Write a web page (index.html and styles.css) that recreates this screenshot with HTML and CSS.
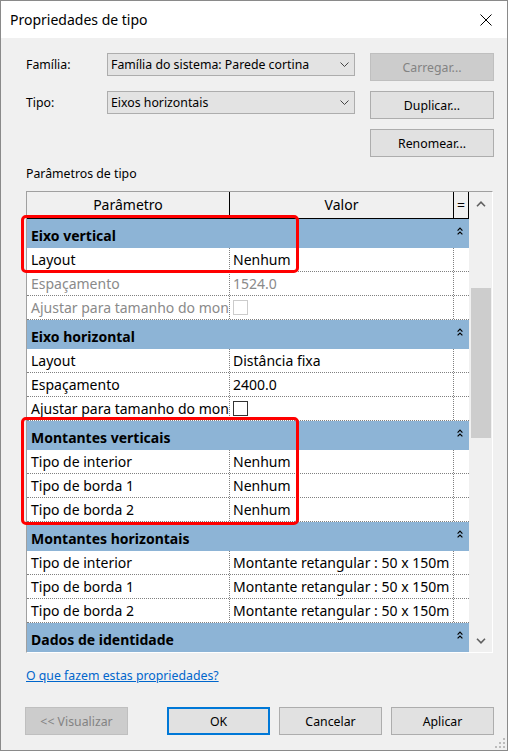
FILE: index.html
```html
<!DOCTYPE html>
<html lang="pt">
<head>
  <meta charset="UTF-8">
  <title>Propriedades de tipo</title>
  <link rel="stylesheet" href="styles.css">
</head>
<body>
  <div class="dialog">
    <!-- Barra de título -->
    <div class="titlebar">
      <span class="title">Propriedades de tipo</span>
      <svg class="close" width="12" height="12" viewBox="0 0 12 12">
        <path d="M0.5 0.5L11.5 11.5M11.5 0.5L0.5 11.5" stroke="#000" stroke-width="1"/>
      </svg>
    </div>

    <div class="content">
      <!-- Família e tipo -->
      <div class="type-form">
        <label>Família:</label>
        <div class="combo">
          <span>Família do sistema: Parede cortina</span>
          <svg width="9" height="5" viewBox="0 0 9 5"><path d="M0.5 0.5L4.5 4.5L8.5 0.5" fill="none" stroke="#444"/></svg>
        </div>
        <button class="btn" disabled>Carregar...</button>

        <label>Tipo:</label>
        <div class="combo">
          <span>Eixos horizontais</span>
          <svg width="9" height="5" viewBox="0 0 9 5"><path d="M0.5 0.5L4.5 4.5L8.5 0.5" fill="none" stroke="#444"/></svg>
        </div>
        <button class="btn">Duplicar...</button>

        <button class="btn btn-rename">Renomear...</button>
      </div>

      <div class="section-title">Parâmetros de tipo</div>

      <!-- Tabela de parâmetros -->
      <div class="grid-frame">
        <div class="grid">
          <div class="grid-header">
            <div>Parâmetro</div>
            <div>Valor</div>
            <div>=</div>
          </div>
          <div id="gridBody"></div>
        </div>
        <div class="scrollbar">
          <div class="scroll-arrow">
            <svg width="10" height="6" viewBox="0 0 10 6"><path d="M1 5.2L5 1.2L9 5.2" fill="none" stroke="#606060" stroke-width="1.6"/></svg>
          </div>
          <div class="scroll-track">
            <div class="scroll-thumb"></div>
          </div>
          <div class="scroll-arrow">
            <svg width="10" height="6" viewBox="0 0 10 6"><path d="M1 0.8L5 4.8L9 0.8" fill="none" stroke="#606060" stroke-width="1.6"/></svg>
          </div>
        </div>
      </div>

      <div class="help">
        <a href="#" class="help-link">O que fazem estas propriedades?</a>
      </div>

      <!-- Botões -->
      <div class="footer">
        <button class="btn btn-wide" disabled>&lt;&lt; Visualizar</button>
        <div class="footer-actions">
          <button class="btn btn-wide btn-default">OK</button>
          <button class="btn btn-wide">Cancelar</button>
          <button class="btn btn-wide">Aplicar</button>
        </div>
      </div>
    </div>

    <!-- Marcações -->
    <div class="mark mark-top"></div>
    <div class="mark mark-bottom"></div>

    <svg class="grip" width="10" height="10" viewBox="0 0 10 10" fill="#bcbcbc">
      <rect x="8" y="0" width="2" height="2"/>
      <rect x="4" y="4" width="2" height="2"/>
      <rect x="8" y="4" width="2" height="2"/>
      <rect x="0" y="8" width="2" height="2"/>
      <rect x="4" y="8" width="2" height="2"/>
      <rect x="8" y="8" width="2" height="2"/>
    </svg>
  </div>

  <script>
    // Grupos de parâmetros do tipo
    const groups = [
      {
        name: "Eixo vertical",
        rows: [
          { param: "Layout", value: "Nenhum" },
          { param: "Espaçamento", value: "1524.0", disabled: true },
          { param: "Ajustar para tamanho do montante", check: true, disabled: true }
        ]
      },
      {
        name: "Eixo horizontal",
        rows: [
          { param: "Layout", value: "Distância fixa" },
          { param: "Espaçamento", value: "2400.0" },
          { param: "Ajustar para tamanho do montante", check: true }
        ]
      },
      {
        name: "Montantes verticais",
        rows: [
          { param: "Tipo de interior", value: "Nenhum" },
          { param: "Tipo de borda 1", value: "Nenhum" },
          { param: "Tipo de borda 2", value: "Nenhum" }
        ]
      },
      {
        name: "Montantes horizontais",
        rows: [
          { param: "Tipo de interior", value: "Montante retangular : 50 x 150m" },
          { param: "Tipo de borda 1", value: "Montante retangular : 50 x 150m" },
          { param: "Tipo de borda 2", value: "Montante retangular : 50 x 150m" }
        ]
      },
      {
        name: "Dados de identidade",
        rows: []
      }
    ];

    const caretSvg = '<svg width="6" height="8" viewBox="0 0 6 8"><path d="M0.6 3.6L3 1.2L5.4 3.6M0.6 7.4L3 5L5.4 7.4" fill="none" stroke="#000" stroke-width="1.2"/></svg>';

    // Monta as linhas da tabela
    function renderGrid() {
      const gridBody = document.getElementById("gridBody");
      gridBody.innerHTML = '';

      groups.forEach(group => {
        const head = document.createElement("div");
        head.classList.add("group");

        const name = document.createElement("div");
        name.classList.add("group-name");
        name.textContent = group.name;

        const toggle = document.createElement("div");
        toggle.classList.add("group-toggle");
        toggle.innerHTML = caretSvg;

        head.appendChild(name);
        head.appendChild(toggle);
        gridBody.appendChild(head);

        group.rows.forEach(item => {
          const row = document.createElement("div");
          row.classList.add("row");
          if (item.disabled) row.classList.add("disabled");

          const param = document.createElement("div");
          param.classList.add("param");
          param.textContent = item.param;

          const value = document.createElement("div");
          value.classList.add("value");
          if (item.check) {
            const box = document.createElement("span");
            box.classList.add("check");
            value.appendChild(box);
          } else {
            value.textContent = item.value;
          }

          const eq = document.createElement("div");

          row.appendChild(param);
          row.appendChild(value);
          row.appendChild(eq);
          gridBody.appendChild(row);
        });
      });
    }

    renderGrid();
  </script>
</body>
</html>
```

FILE: styles.css
```css
/* Janela */
body {
  margin: 0;
  font-family: 'Noto Sans', sans-serif;
  font-size: 14px;
  color: #000;
}

.dialog {
  position: relative;
  width: 508px;
  height: 751px;
  box-sizing: border-box;
  border: 1px solid #8a8a8a;
  background-color: #f0f0f0;
  display: flex;
  flex-direction: column;
}

/* Barra de título */
.titlebar {
  height: 37px;
  flex-shrink: 0;
  background-color: white;
  display: flex;
  align-items: center;
  justify-content: space-between;
  padding: 0 15px 0 9px;
}

.content {
  padding: 15px 13px 0 25px;
  font-size: 12.3px;
}

/* Família / tipo */
.type-form {
  display: grid;
  grid-template-columns: 66px 248px 124px;
  grid-auto-rows: 28px;
  column-gap: 15px;
  row-gap: 10px;
}

.type-form label {
  line-height: 23px;
}

.combo {
  height: 23px;
  box-sizing: border-box;
  border: 1px solid #adadad;
  background-color: #e3e3e3;
  display: flex;
  align-items: center;
  justify-content: space-between;
  padding: 0 5px 0 3px;
}

.btn {
  height: 28px;
  box-sizing: border-box;
  padding: 0;
  font-family: inherit;
  font-size: 12.3px;
  color: #000;
  background-color: #e1e1e1;
  border: 1px solid #adadad;
}

.btn:disabled {
  background-color: #cccccc;
  border-color: #bfbfbf;
  color: #838383;
}

.btn-rename {
  grid-column: 3;
}

.btn-wide {
  width: 103px;
}

.btn-default {
  border: 2px solid #0078d7;
}

.section-title {
  margin: 7px 0;
  line-height: 20px;
}

/* Tabela de parâmetros */
.grid-frame {
  width: 467px;
  height: 462px;
  box-sizing: border-box;
  border-top: 1px solid #a0a0a0;
  border-left: 1px solid #a0a0a0;
  border-right: 1px solid #fff;
  border-bottom: 1px solid #fff;
  display: flex;
  overflow: hidden;
  font-size: 14px;
}

.grid {
  width: 442px;
  overflow: hidden;
  background-color: white;
}

.grid-header {
  display: grid;
  grid-template-columns: 203px 224px 15px;
  height: 27px;
  box-sizing: border-box;
  border-bottom: 1px solid #000;
  background-color: #f0f0f0;
}

.grid-header div {
  border-right: 1px solid #000;
  text-align: center;
  line-height: 26px;
}

.group {
  display: grid;
  grid-template-columns: 427px 15px;
  height: 29px;
  background-color: #8db4d6;
}

.group-name {
  font-weight: bold;
  padding: 7px 0 0 4px;
  line-height: 20px;
}

.group-toggle {
  padding: 8px 0 0 3px;
}

.group-toggle svg {
  display: block;
}

.row {
  display: grid;
  grid-template-columns: 203px 224px 15px;
  height: 24px;
  box-sizing: border-box;
  border-bottom: 1px dotted #808080;
}

.row .param,
.row .value {
  display: flex;
  align-items: center;
  white-space: nowrap;
  overflow: hidden;
  border-right: 1px dotted #808080;
}

.row .param {
  padding-left: 4px;
}

.row .value {
  padding-left: 3px;
}

.row.disabled {
  color: #8a8a8a;
}

.check {
  width: 15px;
  height: 15px;
  box-sizing: border-box;
  border: 1px solid #333;
  background-color: white;
}

.row.disabled .check {
  border-color: #cccccc;
}

/* Barra de rolagem */
.scrollbar {
  width: 23px;
  background-color: #f0f0f0;
  display: flex;
  flex-direction: column;
}

.scroll-arrow {
  height: 23px;
  display: flex;
  align-items: center;
  justify-content: center;
}

.scroll-track {
  flex: 1;
}

.scroll-thumb {
  height: 150px;
  margin: 73px 1px 0 2px;
  background-color: #cdcdcd;
}

/* Link de ajuda */
.help {
  margin-top: 13px;
  line-height: 20px;
}

.help-link {
  color: #0066cc;
  text-decoration: underline;
}

/* Botões de baixo */
.footer {
  display: flex;
  justify-content: space-between;
  margin: 21px 0 0 -1px;
}

.footer-actions {
  display: flex;
  gap: 9px;
}

/* Marcações vermelhas */
.mark {
  position: absolute;
  left: 20px;
  width: 278px;
  box-sizing: border-box;
  border: 3px solid #ff0000;
  border-radius: 5px;
}

.mark-top {
  top: 214px;
  height: 58px;
}

.mark-bottom {
  top: 416px;
  height: 108px;
}

.grip {
  position: absolute;
  right: 2px;
  bottom: 2px;
}
```
